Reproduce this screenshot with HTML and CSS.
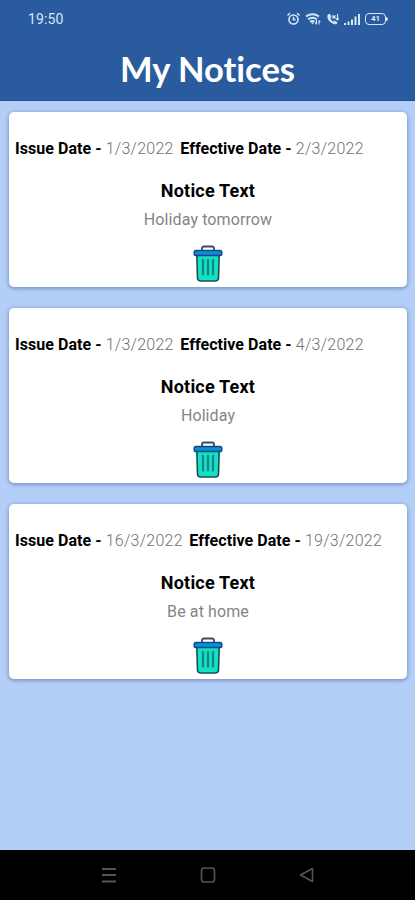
FILE: index.html
```html
<!DOCTYPE html>
<html lang="en">
<head>
    <meta charset="UTF-8">
    <meta name="viewport" content="width=device-width, initial-scale=1.0">
    <title>My Notices</title>
    <link rel="stylesheet" href="styles.css">
</head>
<body>
    <!-- Shared icons -->
    <svg class="sprite" width="0" height="0" aria-hidden="true">
        <symbol id="trash" viewBox="0 0 30 38">
            <path d="M9 5V3.500Q9 1.500 11 1.500h8q2 0 2 2V5" fill="none" stroke="#3d4d58" stroke-width="1.800"/>
            <path d="M3.800 9h22.400l-.7 24q-.2 3-3.200 3H7.700q-3 0-3.200-3z" fill="#12e2c6" stroke="#14504f" stroke-width="1.600"/>
            <rect x="1.200" y="5.500" width="27.600" height="5" rx="1.800" fill="#0a8fd6" stroke="#104a80" stroke-width="1.500"/>
            <path d="M10 15v14.500M15 15v14.500M20 15v14.500" fill="none" stroke="#128783" stroke-width="2.300" stroke-linecap="round"/>
        </symbol>
    </svg>

    <!-- Header -->
    <header>
        <div class="status-bar">
            <span class="time">19:50</span>
            <div class="status-icons">
                <svg width="13" height="14" viewBox="0 0 13 14" fill="none" stroke="currentColor" stroke-width="1.600" stroke-linecap="round">
                    <circle cx="6.500" cy="7.500" r="4.500"/>
                    <path d="M1 3l1.500-1.500M12 3l-1.500-1.500M6.500 5.500v2.300H8"/>
                </svg>
                <svg width="16" height="14" viewBox="0 0 16 14" fill="none" stroke="currentColor" stroke-width="1.900">
                    <path d="M1 4.500q6.500-4.500 13 0M3 7.300q4.500-3.200 9 0M5 9.800q2.500-1.800 4.500 0"/>
                    <path d="M6 10.500l1.500 2 1.500-2z" fill="currentColor" stroke="none"/>
                    <path d="M11.500 8v4M10 10.500l1.500 1.800M14 12.500v-4M14 8.500l1.300 1.500" stroke-width="1.100"/>
                </svg>
                <svg width="13" height="14" viewBox="0 0 13 14" fill="none" stroke="currentColor">
                    <path d="M2 2.500q-1 4.500 2 7t6.500 2.500l.5-1.500-2.500-1.500-1.500 1q-2.500-1.500-3-4l1-1L4 2.500z" fill="currentColor" stroke-width=".8"/>
                    <path d="M7 3v3h3M7.500 5.500l2-2M11.500 2v6M10 6.500l1.500 1.500L13 6.500" stroke-width="1.200"/>
                </svg>
                <svg width="16" height="14" viewBox="0 0 16 14" fill="currentColor">
                    <path d="M0 11h2v2H0zM3.500 9.500h2V13h-2zM7 7.500h2V13H7zM10.500 4.500h2V13h-2zM14 2h2v11h-2z"/>
                </svg>
                <div class="battery"><span>41</span></div>
            </div>
        </div>
        <h1>My Notices</h1>
    </header>

    <!-- Notices -->
    <main>
        <article class="notice">
            <p class="dates">
                <span><b>Issue Date -</b> 1/3/2022</span>
                <span><b>Effective Date -</b> 2/3/2022</span>
            </p>
            <h2>Notice Text</h2>
            <p class="message">Holiday tomorrow</p>
            <button aria-label="Delete notice"><svg width="30" height="38"><use href="#trash"/></svg></button>
        </article>
        <article class="notice">
            <p class="dates">
                <span><b>Issue Date -</b> 1/3/2022</span>
                <span><b>Effective Date -</b> 4/3/2022</span>
            </p>
            <h2>Notice Text</h2>
            <p class="message">Holiday</p>
            <button aria-label="Delete notice"><svg width="30" height="38"><use href="#trash"/></svg></button>
        </article>
        <article class="notice">
            <p class="dates">
                <span><b>Issue Date -</b> 16/3/2022</span>
                <span><b>Effective Date -</b> 19/3/2022</span>
            </p>
            <h2>Notice Text</h2>
            <p class="message">Be at home</p>
            <button aria-label="Delete notice"><svg width="30" height="38"><use href="#trash"/></svg></button>
        </article>
    </main>

    <!-- System navigation -->
    <nav>
        <svg width="16" height="18" viewBox="0 0 16 18" fill="none" stroke="currentColor" stroke-width="2">
            <path d="M1 3h14M1 9h14M1 15.500h14"/>
        </svg>
        <svg width="16" height="18" viewBox="0 0 16 18" fill="none" stroke="currentColor" stroke-width="1.600">
            <rect x="1.500" y="2" width="13" height="14" rx="2.500"/>
        </svg>
        <svg width="16" height="18" viewBox="0 0 16 18" fill="none" stroke="currentColor" stroke-width="1.600" stroke-linejoin="round">
            <path d="M1.500 9l12-6.500v13z"/>
        </svg>
    </nav>
</body>
</html>
```

FILE: styles.css
```css
/* Base Reset */
* {
    margin: 0;
    padding: 0;
    box-sizing: border-box;
}

body {
    font-family: Roboto, sans-serif;
    background-color: #b3cef7;
    color: #000;
    height: 100vh;
    display: flex;
    flex-direction: column;
}

svg {
    display: block;
}

.sprite {
    position: absolute;
}

/* Header */
header {
    height: 101px;
    background-color: #2a5b9f;
    border-bottom: 1px solid #204f91;
    color: #fff;
    text-align: center;
}

.status-bar {
    height: 38px;
    padding: 0 29px 0 28px;
    display: flex;
    align-items: center;
    justify-content: space-between;
    color: #d5e7fa;
}

.time {
    font-size: 14px;
    letter-spacing: 0.1px;
}

.status-icons {
    display: flex;
    align-items: center;
    gap: 5px;
}

.battery {
    width: 21px;
    height: 12px;
    border: 1.5px solid currentColor;
    border-radius: 4px;
    font-size: 8px;
    font-weight: 700;
    line-height: 10px;
    position: relative;
}

.battery::after {
    content: "";
    position: absolute;
    top: 3px;
    right: -3px;
    width: 2px;
    height: 4px;
    border-radius: 0 2px 2px 0;
    background-color: currentColor;
}

h1 {
    font-family: Lato, sans-serif;
    font-size: 34.5px;
    font-weight: 700;
    font-variant-ligatures: none;
    line-height: 62px;
}

/* Notice Cards */
main {
    flex: 1;
    padding: 11px 8px 0 9px;
    display: flex;
    flex-direction: column;
    gap: 21px;
}

.notice {
    height: 175px;
    padding: 26px 6px 0;
    background-color: #fff;
    border-radius: 5px;
    box-shadow: 0 1px 4px rgba(30, 60, 110, 0.5);
    display: flex;
    flex-direction: column;
    align-items: center;
}

.dates {
    width: 100%;
    display: flex;
    gap: 6.5px;
    font-size: 16px;
    letter-spacing: 0.25px;
    line-height: 22px;
    color: #707070;
    font-weight: 300;
    white-space: nowrap;
}

.dates b {
    color: #000;
    font-weight: 700;
    letter-spacing: 0.05px;
}

h2 {
    margin-top: 19px;
    font-size: 18px;
    font-weight: 700;
    letter-spacing: 0.2px;
    line-height: 24px;
}

.message {
    margin-top: 7px;
    font-size: 16px;
    letter-spacing: 0.1px;
    line-height: 20px;
    color: #858585;
}

button {
    margin-top: 15px;
    background: none;
    border: none;
    cursor: pointer;
}

/* System Navigation */
nav {
    height: 50px;
    background-color: #000;
    color: #555;
    display: flex;
    align-items: center;
    justify-content: center;
    gap: 83px;
}
```
